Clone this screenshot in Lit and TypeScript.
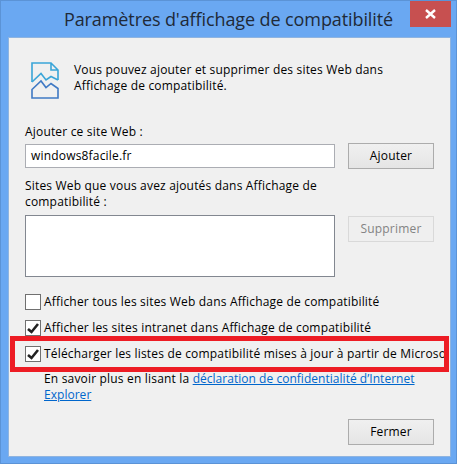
import { LitElement, html, css } from "lit";
import { customElement } from "lit/decorators.js";

@customElement("app-root")
export class AppRoot extends LitElement {
  static styles = css`
    :host { display: block; width: 457px; height: 464px; font-family: "Open Sans", "Noto Sans", sans-serif; }
    * { box-sizing: border-box; }
    .win { position: relative; width: 457px; height: 464px; background: #6aa8f2; border: 1px solid #5b93d6; display: flex; flex-direction: column; overflow: hidden; }
    .titlebar { height: 36px; flex: none; display: flex; align-items: flex-start; }
    .title { flex: 1; text-align: center; font-size: 18px; line-height: 28px; letter-spacing: -0.1px; padding: 4px 0 0 0; margin-left: 46px; color: #1f2a38; white-space: nowrap; }
    .close { width: 41px; height: 26px; flex: none; margin-right: 5px; background: #c75050; display: flex; align-items: center; justify-content: center; }
    .panel { width: 443px; height: 420px; margin-left: 7px; background: #f0f0f0; border: 1px solid #8fb4e0; padding: 21px 16px 0 16px; font-size: 12px; line-height: 16px; letter-spacing: 0.18px; color: #000; display: flex; flex-direction: column; }
    .intro { display: flex; gap: 15px; height: 65px; margin-left: 6px; }
    .intro svg { flex: none; margin-top: 3px; }
    .intro p { margin: 0; padding-top: 3px; }
    .row { display: flex; justify-content: space-between; align-items: flex-start; }
    .col { width: 310px; }
    .input { height: 24px; width: 310px; background: #fff; border: 1px solid #abadb3; padding: 3px 5px; margin-top: 4px; }
    .btn { width: 86px; height: 26px; background: linear-gradient(#f0f0f0, #e5e5e5); border: 1px solid #acacac; text-align: center; line-height: 24px; }
    .btn.add { margin-top: 19px; }
    .btn.off { background: #efefef; border-color: #d9d9d9; color: #838383; margin-top: 47px; }
    .lbl2 { margin-top: 9px; }
    .list { height: 62px; width: 310px; background: #fff; border: 1px solid #828790; margin-top: 5px; }
    .checks { margin-top: 17px; display: flex; flex-direction: column; gap: 10px; }
    .check { display: flex; align-items: center; gap: 3px; height: 16px; white-space: nowrap; width: 420px; overflow: hidden; }
    .box { width: 16px; height: 16px; flex: none; background: #fff; border: 1px solid #707070; display: flex; align-items: center; justify-content: center; }
    .more { margin: 9px 0 0 19px; }
    a { color: #0066cc; text-decoration: underline; letter-spacing: 0.03px; }
    .foot { display: flex; justify-content: flex-end; margin-top: 16px; }
    .frame { position: absolute; left: 9px; top: 335px; width: 439px; height: 36px; border: 5px solid #ed1c24; pointer-events: none; }
  `;

  private tick() {
    return html`<svg width="12" height="11" viewBox="0 0 12 11"><path d="M1 6 L4.5 9 L11 1" fill="none" stroke="#222" stroke-width="2.6"/></svg>`;
  }

  render() {
    return html`<div class="win">
      <div class="titlebar">
        <div class="title">Paramètres d'affichage de compatibilité</div>
        <div class="close"><svg width="11" height="10" viewBox="0 0 11 10"><path d="M1 1 L10 9 M10 1 L1 9" stroke="#fff" stroke-width="2.4" fill="none"/></svg></div>
      </div>
      <div class="panel">
        <div class="intro">
          <svg width="28" height="37" viewBox="0 0 28 37">
            <path d="M1 20 V1 H20 L27 8 V18 M20 1 V8 H27" fill="none" stroke="#3aa5d8" stroke-width="1.6"/>
            <path d="M1 20 L10 11.5 L15 18 L20 14.5 L27 18" fill="none" stroke="#3aa5d8" stroke-width="1.6"/>
            <path d="M1 27.5 L10 19 L15 25.5 L20 21.5 L27 26.5 V36 H1 Z" fill="none" stroke="#3f79c4" stroke-width="1.6"/>
          </svg>
          <p>Vous pouvez ajouter et supprimer des sites Web dans<br />Affichage de compatibilité.</p>
        </div>
        <div class="row">
          <div class="col">
            <div>Ajouter ce site Web :</div>
            <div class="input">windows8facile.fr</div>
          </div>
          <div class="btn add">Ajouter</div>
        </div>
        <div class="row">
          <div class="col">
            <div class="lbl2">Sites Web que vous avez ajoutés dans Affichage de compatibilité :</div>
            <div class="list"></div>
          </div>
          <div class="btn off">Supprimer</div>
        </div>
        <div class="checks">
          <div class="check"><span class="box"></span>Afficher tous les sites Web dans Affichage de compatibilité</div>
          <div class="check"><span class="box">${this.tick()}</span>Afficher les sites intranet dans Affichage de compatibilité</div>
          <div class="check"><span class="box">${this.tick()}</span>Télécharger les listes de compatibilité mises à jour à partir de Microsoft</div>
        </div>
        <div class="more">En savoir plus en lisant la <a>déclaration de confidentialité d’Internet Explorer</a></div>
        <div class="foot"><div class="btn">Fermer</div></div>
      </div>
      <div class="frame"></div>
    </div>`;
  }
}
